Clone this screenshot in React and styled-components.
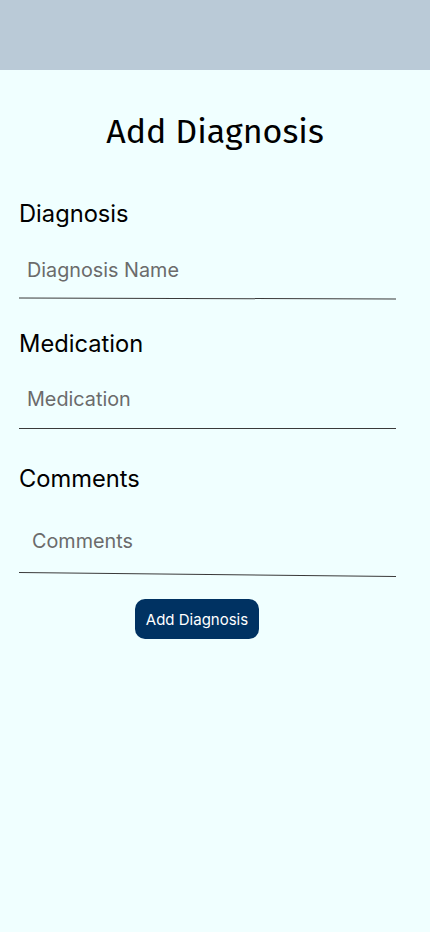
import React from "react";
import styled, { createGlobalStyle } from "styled-components";

const GlobalStyle = createGlobalStyle`
  html, body {
    margin: 0;
    padding: 0;
    background: #f0ffff;
  }
  body {
    font-family: Inter, "Noto Sans", sans-serif;
  }
`;

const Page = styled.div`
  min-height: 932px;
  background: #f0ffff;
  display: flex;
  flex-direction: column;
`;

const TopBar = styled.div`
  height: 70px;
  background: #bacad7;
`;

const Title = styled.h1`
  margin: 40px 0 0;
  height: 44px;
  line-height: 44px;
  text-align: center;
  font-family: "Fira Sans", "Open Sans", sans-serif;
  font-weight: 400;
  font-size: 34px;
  color: #000;
`;

const Form = styled.form`
  display: flex;
  flex-direction: column;
  padding: 0 34px 0 19px;
`;

const Field = styled.div`
  display: flex;
  flex-direction: column;
  margin-top: ${(p) => p.$top}px;
`;

const Label = styled.label`
  font-size: 23.7px;
  line-height: 30px;
  color: #000;
`;

const Input = styled.input`
  border: none;
  background: transparent;
  outline: none;
  font-family: Inter, sans-serif;
  font-size: 19.8px;
  line-height: 24px;
  height: 24px;
  color: #333;
  padding: 0 0 0 ${(p) => p.$indent}px;
  margin-top: ${(p) => p.$gap}px;
  &::placeholder {
    color: #6b6b6b;
    opacity: 1;
  }
`;

const Rule = styled.div`
  height: 1px;
  background: #3a3a3a;
  margin-top: ${(p) => p.$gap}px;
  transform: rotate(${(p) => p.$tilt}deg);
`;

const Submit = styled.button`
  align-self: center;
  margin: 24px 0 0 -21px;
  width: 124px;
  height: 40px;
  border: none;
  border-radius: 10px;
  background: #003262;
  color: #fff;
  font-family: Inter, sans-serif;
  font-size: 15px;
  cursor: pointer;
`;

const fields = [
  { label: "Diagnosis", ph: "Diagnosis Name", top: 45, gap: 29, indent: 8, line: 16, tilt: 0.15 },
  { label: "Medication", ph: "Medication", top: 30, gap: 28, indent: 8, line: 17, tilt: 0 },
  { label: "Comments", ph: "Comments", top: 35, gap: 35, indent: 13, line: 21, tilt: 0.6 },
];

const App = () => {
  return (
    <Page>
      <GlobalStyle />
      <TopBar />
      <Title>Add Diagnosis</Title>
      <Form onSubmit={(e) => e.preventDefault()}>
        {fields.map((f) => (
          <Field key={f.label} $top={f.top}>
            <Label>{f.label}</Label>
            <Input placeholder={f.ph} $gap={f.gap} $indent={f.indent} />
            <Rule $gap={f.line} $tilt={f.tilt} />
          </Field>
        ))}
        <Submit type="submit">Add Diagnosis</Submit>
      </Form>
    </Page>
  );
};

export default App;
